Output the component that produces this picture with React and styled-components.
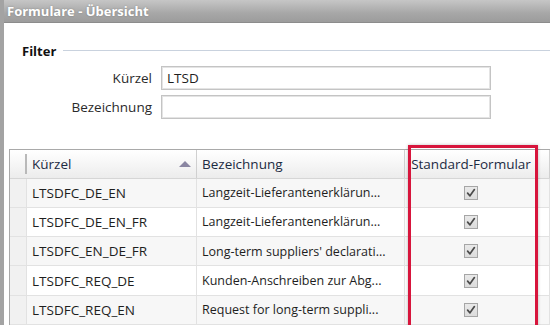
import React from "react";
import styled, { createGlobalStyle } from "styled-components";

const GlobalStyle = createGlobalStyle`
  html, body {
    margin: 0;
    padding: 0;
    width: 550px;
    height: 325px;
    overflow: hidden;
    background: #ffffff;
    font-family: "Open Sans", "Noto Sans", sans-serif;
    font-size: 12px;
    color: #1e1e1e;
  }
`;

const rows = [
  { code: "LTSDFC_DE_EN", name: "Langzeit-Lieferantenerklärun..." },
  { code: "LTSDFC_DE_EN_FR", name: "Langzeit-Lieferantenerklärun..." },
  { code: "LTSDFC_EN_DE_FR", name: "Long-term suppliers' declarati..." },
  { code: "LTSDFC_REQ_DE", name: "Kunden-Anschreiben zur Abg..." },
  { code: "LTSDFC_REQ_EN", name: "Request for long-term suppli..." },
];

const Check = () => (
  <CheckBox>
    <svg width="10" height="10" viewBox="0 0 10 10">
      <path
        d="M1.6 5.2 L4 7.8 L8.4 1.6"
        fill="none"
        stroke="#4a4a4a"
        strokeWidth="1.7"
        strokeLinecap="round"
        strokeLinejoin="round"
      />
    </svg>
  </CheckBox>
);

const App = () => {
  return (
    <Window>
      <GlobalStyle />
      <TitleBar>Formulare - Übersicht</TitleBar>
      <Body>
        <Legend>
          <span>Filter</span>
          <Rule />
        </Legend>
        <Form>
          <Label>Kürzel</Label>
          <Input defaultValue="LTSD" />
          <Label>Bezeichnung</Label>
          <Input defaultValue="" />
        </Form>
        <TableWrap>
          <HeaderRow>
            <RowHead header />
            <HeadCell>
              Kürzel
              <SortArrow />
            </HeadCell>
            <HeadCell>Bezeichnung</HeadCell>
            <HeadCell center>Standard-Formular</HeadCell>
            <HeadCell />
          </HeaderRow>
          {rows.map((r, i) => (
            <Row key={r.code} shaded={i % 2 === 0}>
              <RowHead />
              <Cell code>{r.code}</Cell>
              <Cell>{r.name}</Cell>
              <Cell center>
                <Check />
              </Cell>
              <Cell />
            </Row>
          ))}
          <Highlight />
        </TableWrap>
      </Body>
    </Window>
  );
};

export default App;

const Window = styled.div`
  width: 550px;
  height: 325px;
  overflow: hidden;
  display: flex;
  flex-direction: column;
  border-left: 4px solid #a3a3a3;
  box-sizing: border-box;
`;

const TitleBar = styled.div`
  height: 29px;
  box-sizing: border-box;
  display: flex;
  align-items: center;
  background: linear-gradient(#c6c6c6, #a7a7a7 60%, #9c9c9c);
  border-bottom: 1px solid #8c8c8c;
  color: #ffffff;
  font-weight: 700;
  font-size: 13px;
  text-shadow: 0 0 2px rgba(0, 0, 0, 0.25);
  margin-left: -4px;
  padding-left: 7px;
`;

const Body = styled.div`
  flex: 1;
  display: flex;
  flex-direction: column;
  padding-top: 19px;
`;

const Legend = styled.div`
  display: flex;
  align-items: center;
  gap: 7px;
  padding-left: 18px;
  font-weight: 700;
  font-size: 13px;
  color: #111;
`;

const Rule = styled.div`
  flex: 1;
  height: 1px;
  background: #c9d2de;
`;

const Form = styled.div`
  display: grid;
  grid-template-columns: 148px 330px;
  column-gap: 9px;
  row-gap: 5px;
  margin-top: 6px;
  align-items: center;
`;

const Label = styled.label`
  text-align: right;
  font-size: 13.5px;
  color: #2a2a2a;
`;

const Input = styled.input`
  box-sizing: border-box;
  height: 24px;
  width: 330px;
  border: 1px solid #c4c4c4;
  box-shadow: inset 0 0 0 1px #e4e4e4;
  padding: 0 5px;
  font-family: "Open Sans", "Noto Sans", sans-serif;
  font-size: 13.5px;
  color: #1e1e1e;
  outline: none;
`;

const TableWrap = styled.div`
  position: relative;
  margin-top: 30px;
  margin-left: 5px;
  border-top: 1px solid #a9a9a9;
  border-left: 1px solid #a9a9a9;
`;

const cols = "17px 170px 208px 133px 1fr";

const HeaderRow = styled.div`
  display: grid;
  grid-template-columns: ${cols};
  height: 28px;
  background: linear-gradient(#ffffff, #f6f6f6 50%, #ececec);
  border-bottom: 1px solid #d6d6d6;
`;

const Row = styled.div`
  display: grid;
  grid-template-columns: ${cols};
  height: 29.3px;
  box-sizing: border-box;
  background: ${(p) => (p.shaded ? "#f7f7f7" : "#ffffff")};
  border-bottom: 1px solid #e2e2e2;
`;

const RowHead = styled.div`
  background: ${(p) => (p.header ? "transparent" : "#f1f1f1")};
  border-right: ${(p) => (p.header ? "2px solid #b9b9b9" : "1px solid #e2e2e2")};
  margin: ${(p) => (p.header ? "4px 0" : "0")};
`;

const HeadCell = styled.div`
  position: relative;
  display: flex;
  align-items: center;
  justify-content: ${(p) => (p.center ? "center" : "flex-start")};
  padding: 0 5px;
  border-right: 1px solid #d0d0d0;
  font-size: 13.5px;
  color: #1c2b42;
  white-space: nowrap;
  overflow: hidden;
`;

const SortArrow = styled.span`
  position: absolute;
  right: 5px;
  top: 11px;
  width: 0;
  height: 0;
  border-left: 6px solid transparent;
  border-right: 6px solid transparent;
  border-bottom: 6px solid #8a86a2;
`;

const Cell = styled.div`
  display: flex;
  align-items: center;
  justify-content: ${(p) => (p.center ? "center" : "flex-start")};
  padding: 0 5px;
  border-right: 1px solid #e2e2e2;
  font-size: ${(p) => (p.code ? "13.5px" : "12.5px")};
  color: #1e1e1e;
  white-space: nowrap;
  overflow: hidden;
`;

const CheckBox = styled.span`
  display: flex;
  align-items: center;
  justify-content: center;
  width: 14px;
  height: 14px;
  box-sizing: border-box;
  border: 1px solid #a6a6a6;
  background: linear-gradient(#e9e9e9, #dcdcdc);
`;

const Highlight = styled.div`
  position: absolute;
  left: 398px;
  top: -5px;
  width: 130px;
  height: 200px;
  box-sizing: border-box;
  border: 3px solid #d7153c;
  box-shadow: 0 0 3px rgba(0, 0, 0, 0.25);
  pointer-events: none;
`;
